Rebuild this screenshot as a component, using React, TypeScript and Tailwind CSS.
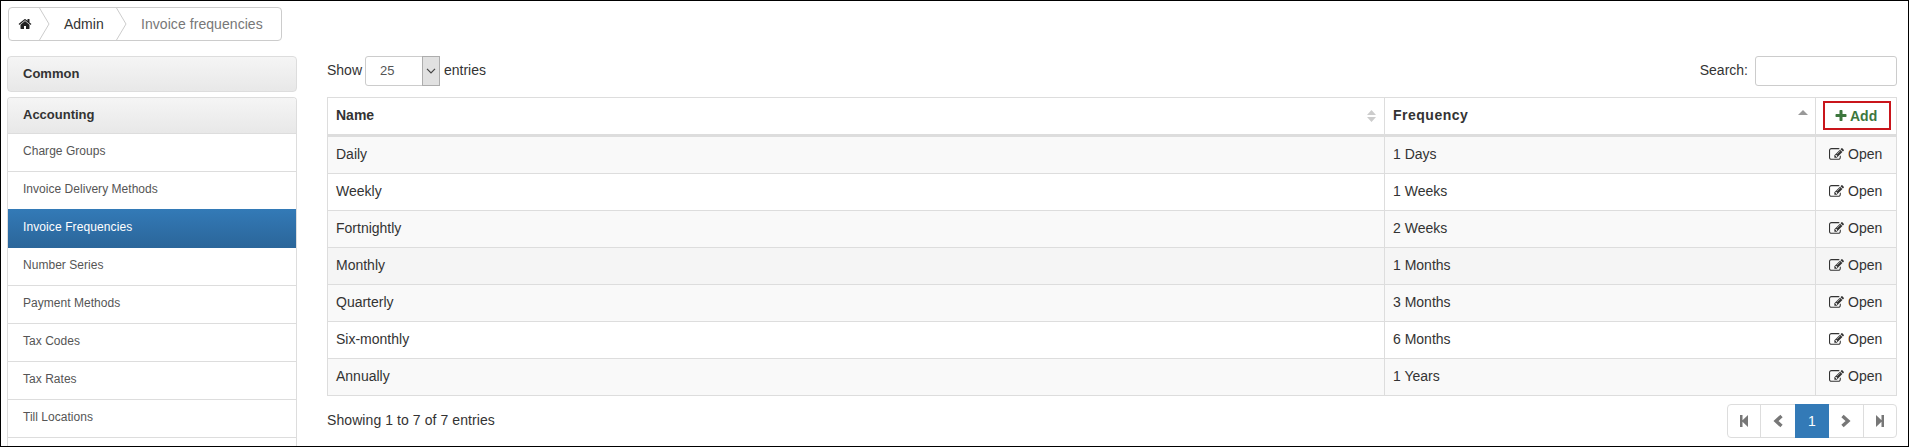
import { useState } from "react";

interface Frequency {
  name: string;
  frequency: string;
}

const frequencies: Frequency[] = [
  { name: "Daily", frequency: "1 Days" },
  { name: "Weekly", frequency: "1 Weeks" },
  { name: "Fortnightly", frequency: "2 Weeks" },
  { name: "Monthly", frequency: "1 Months" },
  { name: "Quarterly", frequency: "3 Months" },
  { name: "Six-monthly", frequency: "6 Months" },
  { name: "Annually", frequency: "1 Years" },
];

const menuItems = [
  "Charge Groups",
  "Invoice Delivery Methods",
  "Invoice Frequencies",
  "Number Series",
  "Payment Methods",
  "Tax Codes",
  "Tax Rates",
  "Till Locations",
];

const HomeIcon = () => (
  <svg width="14" height="14" viewBox="0 0 1792 1792" fill="currentColor">
    <path d="M1472 992v480q0 26-19 45t-45 19h-384v-384h-256v384h-384q-26 0-45-19t-19-45v-480q0-1 .5-3t.5-3l575-474 575 474q1 2 1 6zm223-69l-62 74q-8 9-21 11h-3q-13 0-21-7l-692-577-692 577q-12 8-24 7-13-2-21-11l-62-74q-8-10-7-23.5t11-21.5l719-599q32-26 76-26t76 26l244 204v-195q0-14 9-23t23-9h192q14 0 23 9t9 23v408l219 182q10 8 11 21.5t-7 23.5z" />
  </svg>
);

const PlusIcon = () => (
  <svg width="14" height="14" viewBox="0 0 1792 1792" fill="currentColor">
    <path d="M1600 736v192q0 40-28 68t-68 28h-416v416q0 40-28 68t-68 28h-192q-40 0-68-28t-28-68v-416h-416q-40 0-68-28t-28-68v-192q0-40 28-68t68-28h416v-416q0-40 28-68t68-28h192q40 0 68 28t28 68v416h416q40 0 68 28t28 68z" />
  </svg>
);

const EditIcon = () => (
  <svg width="15" height="15" viewBox="0 0 1792 1792" fill="currentColor">
    <path d="M888 1184l116-116-152-152-116 116v56h96v96h56zm440-720q-16-16-33 1l-350 350q-17 17-1 33t33-1l350-350q17-17 1-33zm80 594v190q0 119-84.5 203.5t-203.5 84.5h-832q-119 0-203.5-84.5t-84.5-203.5v-832q0-119 84.5-203.5t203.5-84.5h832q63 0 117 25 15 7 18 23 3 17-9 29l-49 49q-14 14-32 8-23-6-45-6h-832q-66 0-113 47t-47 113v832q0 66 47 113t113 47h832q66 0 113-47t47-113v-126q0-13 9-22l64-64q15-15 35-7t20 29zm-96-738l288 288-672 672h-288v-288zm444 132l-92 92-288-288 92-92q28-28 68-28t68 28l152 152q28 28 28 68t-28 68z" />
  </svg>
);

const Separator = () => (
  <svg width="11" height="32" viewBox="0 0 11 32" fill="none" stroke="#ccc">
    <path d="M0.5 0L10 16L0.5 32" />
  </svg>
);

const Breadcrumb = () => (
  <div className="ml-px flex h-[34px] w-[274px] items-center rounded border border-[#ccc]">
    <a href="#" className="flex w-[30px] justify-end pr-[7px] text-[#222]">
      <HomeIcon />
    </a>
    <Separator />
    <a href="#" className="w-[66px] pl-[14px] text-[#333]">
      Admin
    </a>
    <Separator />
    <span className="pl-[14px] tracking-[0.06px] whitespace-nowrap text-[#777]">Invoice frequencies</span>
  </div>
);

const Sidebar = ({ active }: { active: string }) => (
  <div className="w-[290px] shrink-0">
    <div className="h-9 rounded border border-[#ddd] bg-linear-to-b from-[#f5f5f5] to-[#e8e8e8] px-[15px] text-[13px] leading-[34px] font-bold text-[#333]">
      Common
    </div>
    <div className="mt-[5px] rounded-t border border-b-0 border-[#ddd]">
      <div className="h-9 rounded-t-[3px] border-b border-[#ddd] bg-linear-to-b from-[#f5f5f5] to-[#e8e8e8] px-[15px] text-[13px] leading-[34px] font-bold text-[#333]">
        Accounting
      </div>
      {menuItems.map((item) => (
        <a
          key={item}
          href="#"
          className={
            item === active
              ? "-mt-px block h-[39px] border-b border-[#2b669a] bg-linear-to-b from-[#337ab7] to-[#2b669a] px-[15px] text-xs leading-[37px] tracking-[0.1px] text-white"
              : "block h-[38px] border-b border-[#ddd] px-[15px] text-xs leading-[35px] tracking-[0.03px] text-[#555]"
          }
        >
          {item}
        </a>
      ))}
      <div className="h-9" />
    </div>
  </div>
);

const Pager = () => (
  <div className="flex h-[34px] w-[170px] rounded border border-[#ddd] text-[#777]">
    <button className="flex w-8 items-center justify-center">
      <svg width="14" height="14" viewBox="0 0 14 14" fill="currentColor">
        <path d="M3 1h2.5v5.2L11 1v12L5.5 7.8V13H3z" />
      </svg>
    </button>
    <button className="flex w-[35px] items-center justify-center border-l border-[#ddd]">
      <svg width="14" height="14" viewBox="0 0 14 14" fill="none" stroke="currentColor" strokeWidth="3.4">
        <path d="M10.5 2L5 7L10.5 12" />
      </svg>
    </button>
    <button className="-my-px w-[34px] bg-[#337ab7] text-sm text-white">1</button>
    <button className="flex w-[34px] items-center justify-center">
      <svg width="14" height="14" viewBox="0 0 14 14" fill="none" stroke="currentColor" strokeWidth="3.4">
        <path d="M3.5 2L9 7L3.5 12" />
      </svg>
    </button>
    <button className="flex w-[33px] items-center justify-center border-l border-[#ddd]">
      <svg width="14" height="14" viewBox="0 0 14 14" fill="currentColor">
        <path d="M11 1H8.5v5.2L3 1v12l5.5-5.2V13H11z" />
      </svg>
    </button>
  </div>
);

const App = () => {
  const [search, setSearch] = useState("");
  const rows = frequencies.filter((f) => f.name.toLowerCase().includes(search.toLowerCase()));

  return (
    <div className="h-[447px] w-[1909px] overflow-hidden border border-black bg-white pt-1.5 pl-1.5 font-['Liberation_Sans',Arial,sans-serif] text-sm text-[#333]">
      <Breadcrumb />
      <div className="mt-[15px] flex">
        <Sidebar active="Invoice Frequencies" />
        <div className="ml-[30px] w-[1570px]">
          <div className="flex h-[30px] items-center justify-between">
            <div className="flex items-center">
              <span className="w-[38px] pb-0.5">Show</span>
              <div className="mr-1 flex h-[30px] w-[75px] rounded-[3px] border border-[#ccc]">
                <span className="flex-1 pl-[14px] text-[13px] leading-[28px] text-[#555]">25</span>
                <span className="-my-px -mr-px flex w-[18px] items-center justify-center border border-[#adadad] bg-[#e1e1e1]">
                  <svg width="10" height="6" viewBox="0 0 10 6" fill="none" stroke="#444" strokeWidth="1.2">
                    <path d="M1 0.8L5 4.8L9 0.8" />
                  </svg>
                </span>
              </div>
              <span className="pb-0.5">entries</span>
            </div>
            <label className="flex items-center">
              <span className="pb-0.5">Search:</span>
              <input
                value={search}
                onChange={(e) => setSearch(e.target.value)}
                className="ml-[7px] h-[30px] w-[142px] rounded-[3px] border border-[#ccc] px-2 text-xs"
              />
            </label>
          </div>

          <div className="mt-[11px] border border-[#ddd]">
            <div className="flex h-[39px] border-b-3 border-[#ddd] font-bold">
              <div className="flex w-[1056px] items-center justify-between pr-2 pl-2">
                <span className="pb-0.5">Name</span>
                <svg width="9" height="12" viewBox="0 0 9 12" fill="#ccc">
                  <path d="M0 5L4.5 0L9 5zM0 7H9L4.5 12z" />
                </svg>
              </div>
              <div className="flex w-[431px] items-center justify-between border-l border-[#ddd] pr-[7px] pl-2">
                <span className="pb-0.5 tracking-[0.5px]">Frequency</span>
                <svg width="10" height="12" viewBox="0 0 10 12" fill="#999">
                  <path d="M0 5L5 0L10 5z" />
                </svg>
              </div>
              <div className="flex flex-1 items-start border-l border-[#ddd] pt-[3px] pl-[7px]">
                <button className="flex h-[29px] w-[68px] items-center gap-[2px] border-2 border-[#c9151b] pl-[9px] font-bold text-[#3c763d]">
                  <PlusIcon />
                  Add
                </button>
              </div>
            </div>
            {rows.map((row, index) => (
              <div
                key={row.name}
                className={`flex h-[37px] border-b border-[#ddd] leading-[35px] last:h-9 last:border-b-0 ${
                  row.name === "Monthly" ? "bg-[#f5f5f5]" : index % 2 === 0 ? "bg-[#f9f9f9]" : "bg-white"
                }`}
              >
                <div className="w-[1056px] pl-2">{row.name}</div>
                <div className="w-[431px] border-l border-[#ddd] pl-2">{row.frequency}</div>
                <a href="#" className="flex flex-1 items-center gap-1 border-l border-[#ddd] pb-px pl-[13px]">
                  <EditIcon />
                  Open
                </a>
              </div>
            ))}
          </div>

          <div className="mt-2 flex justify-between">
            <div className="leading-[32px] tracking-[0.08px]">Showing 1 to 7 of 7 entries</div>
            <Pager />
          </div>
        </div>
      </div>
    </div>
  );
};

export default App;
